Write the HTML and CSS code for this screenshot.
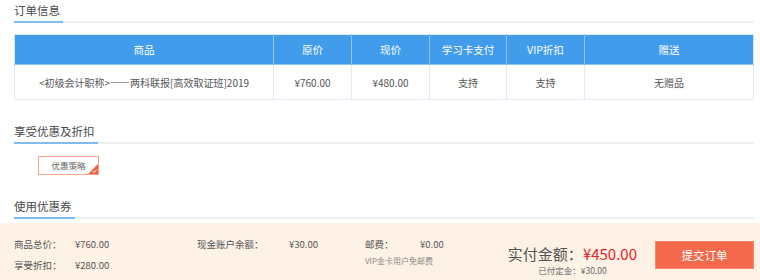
FILE: index.html
```html
<!DOCTYPE html>
<html lang="zh-CN">
<head>
<meta charset="utf-8">
<title>订单信息</title>
<link rel="stylesheet" href="styles.css">
</head>
<body>
<div class="page">
  <div class="sec-head"><span class="sec-title">订单信息</span></div>
  <table class="order">
    <colgroup>
      <col class="c1"><col class="c2"><col class="c3"><col class="c4"><col class="c5"><col class="c6">
    </colgroup>
    <thead>
      <tr><th>商品</th><th>原价</th><th>现价</th><th>学习卡支付</th><th>VIP折扣</th><th>赠送</th></tr>
    </thead>
    <tbody>
      <tr><td>&lt;初级会计职称&gt;——两科联报[高效取证班]2019</td><td>¥760.00</td><td>¥480.00</td><td>支持</td><td>支持</td><td>无赠品</td></tr>
    </tbody>
  </table>

  <div class="sec-head sec-gap"><span class="sec-title">享受优惠及折扣</span></div>
  <div class="coupon">优惠策略
    <svg class="coupon-mark" width="10" height="10" viewBox="0 0 10 10"><polygon points="10,0 10,10 0,10" fill="#f0603d"/><path d="M4.6 7.4 L6.1 8.6 L8.6 5.6" fill="none" stroke="#fff" stroke-width="1"/></svg>
  </div>

  <div class="sec-head sec-gap"><span class="sec-title">使用优惠券</span></div>
</div>

<div class="footer">
  <div class="summary">
    <span class="lbl">商品总价：</span><span class="val">¥760.00</span>
    <span class="lbl">现金账户余额：</span><span class="val">¥30.00</span>
    <span class="lbl">邮费：</span><span class="val">¥0.00</span>
    <span class="lbl">享受折扣：</span><span class="val">¥280.00</span>
    <span></span><span></span>
    <span class="note">VIP金卡用户免邮费</span><span></span>
  </div>
  <div class="pay">
    <div class="pay-total">实付金额：<span class="pay-num">¥450.00</span></div>
    <div class="pay-paid">已付定金：¥30.00</div>
  </div>
  <button class="submit">提交订单</button>
</div>
</body>
</html>
```

FILE: styles.css
```css
* { box-sizing: border-box; }
html, body { margin: 0; padding: 0; background: #fff; }
body {
  font-family: "Noto Sans CJK SC", "Noto Sans", sans-serif;
  color: #555;
  overflow: hidden;
}
.page { padding: 1px 6px 0 14px; }

.sec-head {
  display: flex;
  align-items: flex-end;
  border-bottom: 2px solid #efefef;
  height: 22px;
}
.sec-gap { margin-top: 22px; }
.sec-title {
  display: block;
  font-size: 11.5px;
  line-height: 18px;
  padding: 0 3px 2px 0;
  margin-bottom: -2px;
  color: #4a4a4a;
  border-bottom: 2px solid #82bcef;
}

.order {
  margin-top: 11px;
  width: 739px;
  border-collapse: collapse;
  table-layout: fixed;
  font-size: 10px;
  text-align: center;
}
.c1 { width: 259px; }
.c2 { width: 78px; }
.c3 { width: 78px; }
.c4 { width: 77px; }
.c5 { width: 78px; }
.c6 { width: 169px; }
.order th {
  height: 30px;
  background: #419cec;
  color: #fff;
  font-weight: normal;
  font-size: 10.5px;
  border: 1px solid #8ec4f3;
  border-top-color: #dbe7f4;
  padding: 0;
}
.order th:first-child { border-left-color: #dbe7f4; }
.order th:last-child { border-right-color: #dbe7f4; }
.order td {
  height: 35px;
  border: 1px solid #dfe9f4;
  color: #555;
  padding: 0;
}

.coupon {
  position: relative;
  margin: 12px 0 0 24px;
  width: 61px;
  height: 19px;
  border: 1px solid #f6a28d;
  font-size: 8.5px;
  line-height: 17px;
  color: #666;
  text-align: center;
}
.coupon-mark { position: absolute; right: 0; bottom: 0; }

.footer {
  margin-top: 4px;
  height: 58px;
  background: #fef1e6;
  display: flex;
  align-items: flex-start;
  padding: 11px 6px 0 14px;
}
.summary {
  flex: 1;
  display: grid;
  grid-template-columns: 61px 122px 92px 76px 55px auto;
  grid-auto-rows: 21px;
  font-size: 9.5px;
  line-height: 21px;
  color: #555;
}
.lbl { color: #555; }
.note {
  font-size: 8px;
  line-height: 11px;
  color: #888;
  white-space: nowrap;
  align-self: start;
}
.pay {
  margin-top: 10px;
  margin-right: 18px;
  text-align: center;
}
.pay-total {
  font-size: 15px;
  line-height: 20px;
  color: #555;
}
.pay-num { color: #ec1c24; }
.pay-paid {
  font-size: 8.5px;
  line-height: 12px;
  color: #666;
}
.submit {
  margin-top: 7px;
  width: 99px;
  height: 28px;
  border: 1px solid #f48a70;
  background: #f2694b;
  color: #fff;
  font-family: inherit;
  font-size: 11.5px;
  padding: 0;
}
```
